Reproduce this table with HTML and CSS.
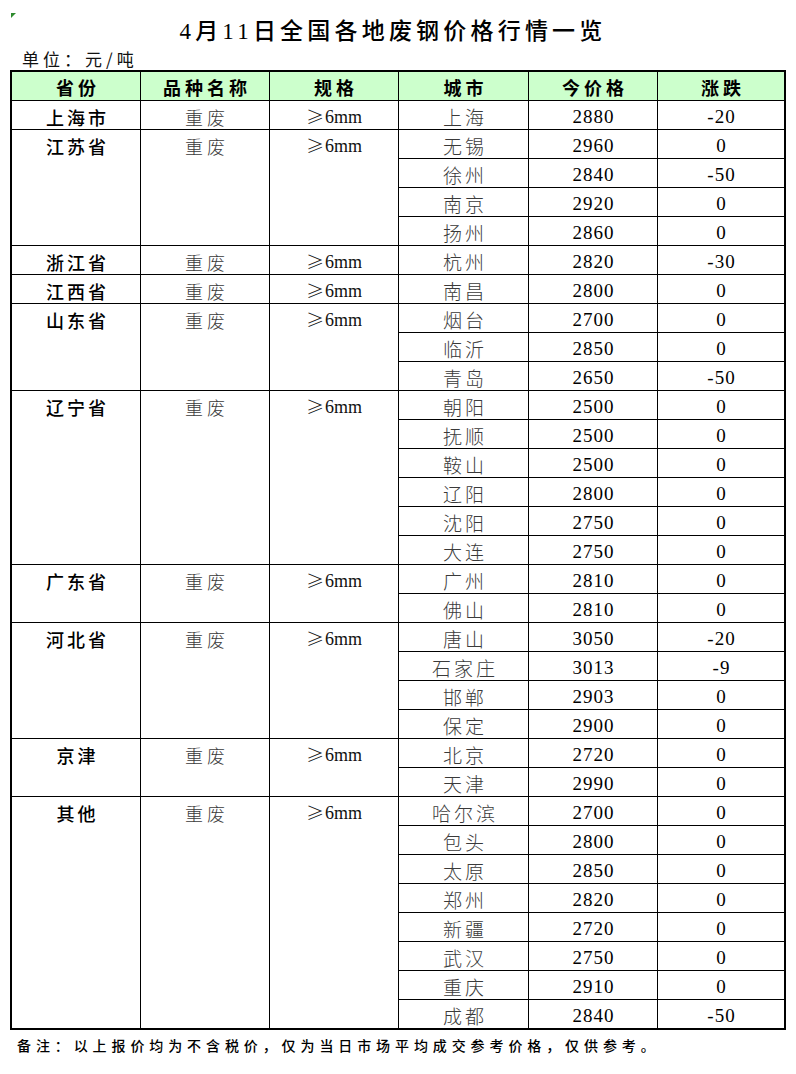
FILE: index.html
```html
<!DOCTYPE html>
<html lang="zh-CN">
<head>
<meta charset="utf-8">
<title>4月11日全国各地废钢价格行情一览</title>
<link rel="stylesheet" href="styles.css">
</head>
<body>
<div class="page">
  <span class="marker"></span>
  <h1 class="title">4月11日全国各地废钢价格行情一览</h1>
  <div class="unit">单位：元/吨</div>
  <div class="grid">
    <div class="hd">省份</div><div class="hd">品种名称</div><div class="hd">规格</div><div class="hd">城市</div><div class="hd">今价格</div><div class="hd">涨跌</div>

    <div class="prov r1">上海市</div><div class="kind r1">重废</div><div class="spec r1"><span class="ge">≥</span>6mm</div>
    <div class="city">上海</div><div class="num">2880</div><div class="num">-20</div>

    <div class="prov r4">江苏省</div><div class="kind r4">重废</div><div class="spec r4"><span class="ge">≥</span>6mm</div>
    <div class="city">无锡</div><div class="num">2960</div><div class="num">0</div>
    <div class="city">徐州</div><div class="num">2840</div><div class="num">-50</div>
    <div class="city">南京</div><div class="num">2920</div><div class="num">0</div>
    <div class="city">扬州</div><div class="num">2860</div><div class="num">0</div>

    <div class="prov r1">浙江省</div><div class="kind r1">重废</div><div class="spec r1"><span class="ge">≥</span>6mm</div>
    <div class="city">杭州</div><div class="num">2820</div><div class="num">-30</div>

    <div class="prov r1">江西省</div><div class="kind r1">重废</div><div class="spec r1"><span class="ge">≥</span>6mm</div>
    <div class="city">南昌</div><div class="num">2800</div><div class="num">0</div>

    <div class="prov r3">山东省</div><div class="kind r3">重废</div><div class="spec r3"><span class="ge">≥</span>6mm</div>
    <div class="city">烟台</div><div class="num">2700</div><div class="num">0</div>
    <div class="city">临沂</div><div class="num">2850</div><div class="num">0</div>
    <div class="city">青岛</div><div class="num">2650</div><div class="num">-50</div>

    <div class="prov r6">辽宁省</div><div class="kind r6">重废</div><div class="spec r6"><span class="ge">≥</span>6mm</div>
    <div class="city">朝阳</div><div class="num">2500</div><div class="num">0</div>
    <div class="city">抚顺</div><div class="num">2500</div><div class="num">0</div>
    <div class="city">鞍山</div><div class="num">2500</div><div class="num">0</div>
    <div class="city">辽阳</div><div class="num">2800</div><div class="num">0</div>
    <div class="city">沈阳</div><div class="num">2750</div><div class="num">0</div>
    <div class="city">大连</div><div class="num">2750</div><div class="num">0</div>

    <div class="prov r2">广东省</div><div class="kind r2">重废</div><div class="spec r2"><span class="ge">≥</span>6mm</div>
    <div class="city">广州</div><div class="num">2810</div><div class="num">0</div>
    <div class="city">佛山</div><div class="num">2810</div><div class="num">0</div>

    <div class="prov r4">河北省</div><div class="kind r4">重废</div><div class="spec r4"><span class="ge">≥</span>6mm</div>
    <div class="city">唐山</div><div class="num">3050</div><div class="num">-20</div>
    <div class="city">石家庄</div><div class="num">3013</div><div class="num">-9</div>
    <div class="city">邯郸</div><div class="num">2903</div><div class="num">0</div>
    <div class="city">保定</div><div class="num">2900</div><div class="num">0</div>

    <div class="prov r2">京津</div><div class="kind r2">重废</div><div class="spec r2"><span class="ge">≥</span>6mm</div>
    <div class="city">北京</div><div class="num">2720</div><div class="num">0</div>
    <div class="city">天津</div><div class="num">2990</div><div class="num">0</div>

    <div class="prov r8">其他</div><div class="kind r8">重废</div><div class="spec r8"><span class="ge">≥</span>6mm</div>
    <div class="city">哈尔滨</div><div class="num">2700</div><div class="num">0</div>
    <div class="city">包头</div><div class="num">2800</div><div class="num">0</div>
    <div class="city">太原</div><div class="num">2850</div><div class="num">0</div>
    <div class="city">郑州</div><div class="num">2820</div><div class="num">0</div>
    <div class="city">新疆</div><div class="num">2720</div><div class="num">0</div>
    <div class="city">武汉</div><div class="num">2750</div><div class="num">0</div>
    <div class="city">重庆</div><div class="num">2910</div><div class="num">0</div>
    <div class="city">成都</div><div class="num">2840</div><div class="num">-50</div>
  </div>
  <p class="note">备注：以上报价均为不含税价，仅为当日市场平均成交参考价格，仅供参考。</p>
</div>
</body>
</html>
```
FILE: styles.css
```css
html, body {
  margin: 0;
  padding: 0;
  background: #fff;
}

body {
  font-family: "Liberation Serif", "Noto Sans CJK SC", serif;
  color: #000;
}

.page {
  position: relative;
  width: 796px;
}

.marker {
  position: absolute;
  left: 11px;
  top: 13px;
  width: 0;
  height: 0;
  border-top: 5px solid #2e8b2e;
  border-right: 5px solid transparent;
}

.title {
  margin: 0;
  padding: 17px 10px 0 0;
  height: 30px;
  line-height: 30px;
  font-size: 23px;
  font-weight: 500;
  letter-spacing: 4.2px;
  text-align: center;
  font-family: "Liberation Serif", "Noto Sans CJK SC", serif;
}

.unit {
  height: 23px;
  line-height: 24px;
  padding-left: 22px;
  font-size: 17px;
  letter-spacing: 4px;
  font-family: "Noto Sans CJK SC", sans-serif;
  font-weight: 400;
  color: #111;
}

.grid {
  margin-left: 10px;
  width: 772px;
  display: grid;
  grid-template-columns: 128px 128px 128px 129px 128px 126px;
  grid-auto-rows: 28px;
  gap: 1px;
  background: #000;
  border: 2px solid #000;
}

.grid > div {
  box-sizing: border-box;
  padding-top: 2px;
  background: #fff;
  line-height: 28px;
  text-align: center;
  white-space: nowrap;
  overflow: hidden;
}

.grid > .hd {
  padding-top: 1px;
  background: #ccffcc;
  font-family: "Noto Sans CJK SC", sans-serif;
  font-weight: 700;
  font-size: 18px;
  letter-spacing: 4px;
  text-indent: 4px;
}

.r1 { grid-row: span 1; }
.r2 { grid-row: span 2; }
.r3 { grid-row: span 3; }
.r4 { grid-row: span 4; }
.r6 { grid-row: span 6; }
.r8 { grid-row: span 8; }

.prov {
  grid-column: 1;
  font-family: "Noto Sans CJK SC", sans-serif;
  font-weight: 500;
  font-size: 18px;
  letter-spacing: 3px;
  text-indent: 3px;
}

.kind {
  grid-column: 2;
  font-family: "Noto Sans CJK SC", sans-serif;
  font-weight: 300;
  color: #3a3a3a;
  font-size: 18px;
  letter-spacing: 4px;
  text-indent: 4px;
}

.spec {
  grid-column: 3;
  font-size: 18px;
  color: #111;
}

.spec .ge {
  font-family: "Noto Sans CJK SC", sans-serif;
  font-weight: 300;
  font-size: 18px;
  line-height: 1;
  vertical-align: -1px;
  margin-right: 1px;
}

.city {
  grid-column: 4;
  font-family: "Noto Sans CJK SC", sans-serif;
  font-weight: 300;
  color: #3a3a3a;
  font-size: 19px;
  letter-spacing: 3px;
  text-indent: 3px;
}

.num {
  font-size: 19px;
  letter-spacing: 1px;
  text-indent: 1px;
}

.note {
  margin: 0;
  padding-left: 17px;
  height: 30px;
  line-height: 30px;
  font-family: "Noto Sans CJK SC", sans-serif;
  font-weight: 500;
  font-size: 14px;
  letter-spacing: 4.9px;
}
```
